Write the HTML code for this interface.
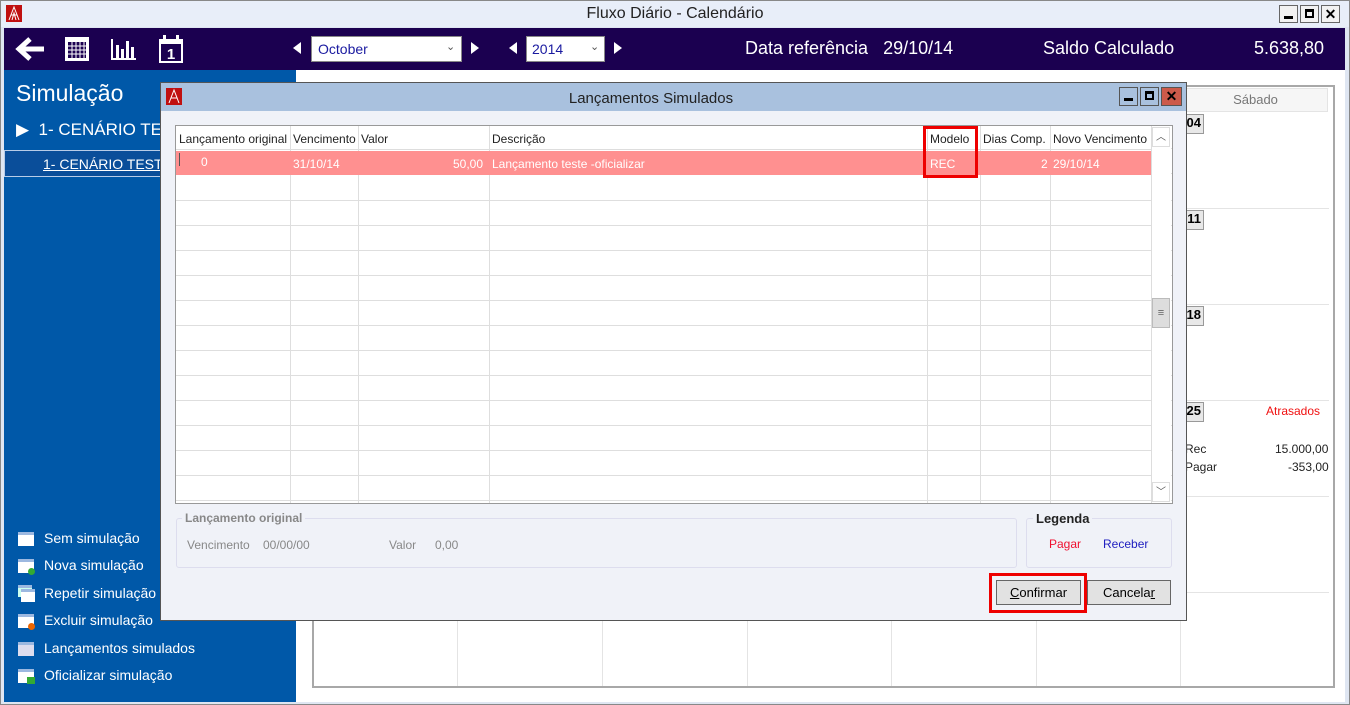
<!DOCTYPE html>
<html><head><meta charset="utf-8"><style>
*{margin:0;padding:0;box-sizing:border-box}
body{width:1350px;height:705px;overflow:hidden;background:#f0f0f0;font-family:"Liberation Sans",sans-serif;position:relative}
.a{position:absolute}
.t{font-size:12px;color:#222;white-space:nowrap}
</style></head><body>
<!-- outer window -->
<div class="a" style="left:0;top:0;width:1350px;height:705px;background:#dfe6f2;border:1px solid #888"></div>
<div class="a" style="left:1px;top:1px;width:1348px;height:26px;background:#e8eef9"></div>
<svg class="a" style="left:6px;top:5px" width="16" height="17"><rect width="16" height="17" fill="#c01010"/><path d="M3 15L8 2L13 15M5 10L11 10M6 15L8 8L10 15" stroke="#fff" stroke-width="1" fill="none"/></svg>
<div class="a" style="left:0;width:1350px;top:5px;text-align:center;font-size:16px;color:#222">Fluxo Diário - Calendário</div>
<div class="a" style="left:1279px;top:5px;width:19px;height:18px;border:1px solid #666;background:#f2f2f2"><div class="a" style="left:4px;top:10px;width:9px;height:3px;background:#000"></div></div>
<div class="a" style="left:1300px;top:5px;width:19px;height:18px;border:1px solid #666;background:#f2f2f2"><div class="a" style="left:4px;top:3px;width:9px;height:9px;border:2px solid #000;border-top-width:3px"></div></div>
<div class="a" style="left:1321px;top:5px;width:19px;height:18px;border:1px solid #666;background:#f2f2f2;font-size:14px;font-weight:bold;text-align:center;line-height:16px">✕</div>
<!-- toolbar -->
<div class="a" style="left:4px;top:28px;width:1341px;height:42px;background:#1b0050"></div>
<svg class="a" style="left:12px;top:35px" width="34" height="28"><path d="M32 14H8M18 4L7 14L18 24" stroke="#fff" stroke-width="5" fill="none"/></svg>
<svg class="a" style="left:64px;top:36px" width="26" height="26"><rect x="1" y="1" width="24" height="24" fill="#fff"/><rect x="4" y="6" width="18" height="16" fill="#1b0050"/><path d="M4 10H22M4 14H22M4 18H22M8 6V22M12 6V22M16 6V22M20 6V22" stroke="#fff" stroke-width="1"/></svg>
<svg class="a" style="left:110px;top:37px" width="28" height="24"><path d="M2 2V22H26" stroke="#fff" stroke-width="2" fill="none"/><rect x="6" y="8" width="3" height="13" fill="#fff"/><rect x="11" y="12" width="3" height="9" fill="#fff"/><rect x="16" y="4" width="3" height="17" fill="#fff"/><rect x="21" y="10" width="3" height="11" fill="#fff"/></svg>
<svg class="a" style="left:157px;top:34px" width="28" height="30"><rect x="2" y="5" width="24" height="24" fill="#fff"/><rect x="4" y="10" width="20" height="17" fill="#1b0050"/><rect x="6" y="1" width="3" height="7" fill="#fff"/><rect x="19" y="1" width="3" height="7" fill="#fff"/><text x="14" y="25" font-size="15" font-weight="bold" fill="#fff" text-anchor="middle" font-family="Liberation Sans">1</text></svg>
<svg class="a" style="left:291px;top:41px" width="12" height="14"><path d="M10 1L2 7L10 13Z" fill="#fff"/></svg>
<div class="a" style="left:311px;top:36px;width:151px;height:26px;background:#fff;border:1px solid #888"><span class="a" style="left:6px;top:4px;font-size:14px;color:#1a1aa0">October</span><span class="a" style="left:134px;top:3px;font-size:11px;color:#555">⌄</span></div>
<svg class="a" style="left:469px;top:41px" width="12" height="14"><path d="M2 1L10 7L2 13Z" fill="#fff"/></svg>
<svg class="a" style="left:507px;top:41px" width="12" height="14"><path d="M10 1L2 7L10 13Z" fill="#fff"/></svg>
<div class="a" style="left:526px;top:36px;width:79px;height:26px;background:#fff;border:1px solid #888"><span class="a" style="left:5px;top:4px;font-size:14px;color:#1a1aa0">2014</span><span class="a" style="left:63px;top:3px;font-size:11px;color:#555">⌄</span></div>
<svg class="a" style="left:612px;top:41px" width="12" height="14"><path d="M2 1L10 7L2 13Z" fill="#fff"/></svg>
<div class="a" style="left:745px;top:38px;font-size:18px;color:#fff">Data referência&nbsp;&nbsp;&nbsp;29/10/14</div>
<div class="a" style="left:1043px;top:38px;font-size:18px;color:#fff">Saldo Calculado</div>
<div class="a" style="left:1254px;top:38px;font-size:18px;color:#fff">5.638,80</div>
<!-- left panel -->
<div class="a" style="left:4px;top:70px;width:292px;height:632px;background:#0058a8"></div>
<div class="a" style="left:16px;top:80px;font-size:23px;color:#fff">Simulação</div>
<div class="a" style="left:16px;top:120px;font-size:17px;color:#fff">▶&nbsp;&nbsp;1- CENÁRIO TESTE</div>
<div class="a" style="left:4px;top:150px;width:292px;height:27px;border:1px solid #b8cce8;background:#0a4e9a"></div>
<div class="a" style="left:43px;top:156px;font-size:14px;color:#fff;text-decoration:underline">1- CENÁRIO TESTE</div>
<div class="a" style="left:18px;top:530px;font-size:14px;color:#fff;line-height:27.4px">
<div>&#8203;</div></div>
<div class="a" style="left:18px;top:530px">
<div style="height:27.4px;position:relative"><span class="a" style="left:0;top:2px;width:16px;height:14px;background:#fff;border-top:3px solid #9cb8e0"></span><span class="a t" style="left:26px;top:0;font-size:14px;color:#fff">Sem simulação</span></div>
<div style="height:27.4px;position:relative"><span class="a" style="left:0;top:2px;width:16px;height:14px;background:#fff;border-top:3px solid #9cb8e0"></span><span class="a" style="left:10px;top:11px;width:7px;height:7px;border-radius:4px;background:#3a3"></span><span class="a t" style="left:26px;top:0;font-size:14px;color:#fff">Nova simulação</span></div>
<div style="height:27.4px;position:relative"><span class="a" style="left:0;top:0;width:14px;height:12px;background:#cfe;border-top:3px solid #9cb8e0"></span><span class="a" style="left:3px;top:4px;width:14px;height:13px;background:#fff;border-top:3px solid #9cb8e0"></span><span class="a t" style="left:26px;top:0;font-size:14px;color:#fff">Repetir simulação</span></div>
<div style="height:27.4px;position:relative"><span class="a" style="left:0;top:2px;width:16px;height:14px;background:#fff;border-top:3px solid #9cb8e0"></span><span class="a" style="left:10px;top:11px;width:7px;height:7px;border-radius:4px;background:#e60"></span><span class="a t" style="left:26px;top:0;font-size:14px;color:#fff">Excluir simulação</span></div>
<div style="height:27.4px;position:relative"><span class="a" style="left:0;top:2px;width:16px;height:14px;background:#dde;border-top:3px solid #9cb8e0"></span><span class="a t" style="left:26px;top:0;font-size:14px;color:#fff">Lançamentos simulados</span></div>
<div style="height:27.4px;position:relative"><span class="a" style="left:0;top:2px;width:16px;height:14px;background:#fff;border-top:3px solid #9cb8e0"></span><span class="a" style="left:9px;top:10px;width:8px;height:7px;background:#3a3"></span><span class="a t" style="left:26px;top:0;font-size:14px;color:#fff">Oficializar simulação</span></div>
</div>
<!-- right area -->
<div class="a" style="left:296px;top:70px;width:1049px;height:632px;background:#fff"></div>
<div class="a" style="left:312px;top:85px;width:1023px;height:603px;border:2px solid #a8a8a8;background:#fff"></div>
<div class="a" style="left:1183px;top:88px;width:145px;height:24px;background:#f6f6f6;border:1px solid #e4e4e4;text-align:center;font-size:13px;color:#777;line-height:22px">Sábado</div>
<div class="a" style="left:314px;top:208px;width:1015px;height:1px;background:#e4e4e4"></div>
<div class="a" style="left:314px;top:304px;width:1015px;height:1px;background:#e4e4e4"></div>
<div class="a" style="left:314px;top:400px;width:1015px;height:1px;background:#e4e4e4"></div>
<div class="a" style="left:314px;top:496px;width:1015px;height:1px;background:#e4e4e4"></div>
<div class="a" style="left:314px;top:592px;width:1015px;height:1px;background:#e4e4e4"></div>
<div class="a" style="left:457px;top:620px;width:1px;height:66px;background:#e4e4e4"></div>
<div class="a" style="left:602px;top:620px;width:1px;height:66px;background:#e4e4e4"></div>
<div class="a" style="left:747px;top:620px;width:1px;height:66px;background:#e4e4e4"></div>
<div class="a" style="left:891px;top:620px;width:1px;height:66px;background:#e4e4e4"></div>
<div class="a" style="left:1036px;top:620px;width:1px;height:66px;background:#e4e4e4"></div>
<div class="a" style="left:1180px;top:593px;width:1px;height:93px;background:#e4e4e4"></div>
<div class="a" style="left:1180px;top:114px;width:24px;height:20px;background:#e8e8e8;border:1px solid #999;font-size:13px;font-weight:bold;text-align:right;padding-right:2px">04</div>
<div class="a" style="left:1180px;top:210px;width:24px;height:20px;background:#e8e8e8;border:1px solid #999;font-size:13px;font-weight:bold;text-align:right;padding-right:2px">11</div>
<div class="a" style="left:1180px;top:306px;width:24px;height:20px;background:#e8e8e8;border:1px solid #999;font-size:13px;font-weight:bold;text-align:right;padding-right:2px">18</div>
<div class="a" style="left:1180px;top:402px;width:24px;height:20px;background:#e8e8e8;border:1px solid #999;font-size:13px;font-weight:bold;text-align:right;padding-right:2px">25</div>
<div class="a t" style="left:1266px;top:404px;color:#f01010">Atrasados</div>
<div class="a t" style="left:1185px;top:442px">Rec</div>
<div class="a t" style="left:1275px;top:442px">15.000,00</div>
<div class="a t" style="left:1185px;top:460px">Pagar</div>
<div class="a t" style="left:1288px;top:460px">-353,00</div>
<!-- dialog -->
<div class="a" style="left:160px;top:82px;width:1027px;height:539px;border:1px solid #555;background:#f0f2f8"></div>
<div class="a" style="left:161px;top:83px;width:1025px;height:28px;background:#a9c1de"></div>
<svg class="a" style="left:166px;top:88px" width="16" height="17"><rect width="16" height="17" fill="#c01010"/><path d="M3 15L8 2L13 15M5 10L11 10" stroke="#fff" stroke-width="1" fill="none"/></svg>
<div class="a" style="left:160px;width:982px;top:90px;text-align:center;font-size:15px;color:#222">Lançamentos Simulados</div>
<div class="a" style="left:1119px;top:87px;width:19px;height:19px;border:1px solid #555;background:#a9c1de"><div class="a" style="left:4px;top:10px;width:9px;height:3px;background:#000"></div></div>
<div class="a" style="left:1140px;top:87px;width:19px;height:19px;border:1px solid #555;background:#a9c1de"><div class="a" style="left:4px;top:3px;width:9px;height:9px;border:2px solid #000;border-top-width:3px"></div></div>
<div class="a" style="left:1161px;top:87px;width:21px;height:19px;border:1px solid #555;background:#cc5a4a;font-size:14px;font-weight:bold;text-align:center;line-height:17px">✕</div>
<!-- grid -->
<div class="a" style="left:175px;top:125px;width:998px;height:379px;border:1px solid #999;background:#fff;
background-image:repeating-linear-gradient(to bottom,transparent 0,transparent 24px,#dedede 24px,#dedede 25px);background-position:0 50px"></div>
<div class="a" style="left:176px;top:126px;width:975px;height:24px;background:#fff;border-bottom:1px solid #ddd"></div>
<div class="a" style="left:290px;top:126px;width:1px;height:377px;background:#dedede"></div>
<div class="a" style="left:358px;top:126px;width:1px;height:377px;background:#dedede"></div>
<div class="a" style="left:489px;top:126px;width:1px;height:377px;background:#dedede"></div>
<div class="a" style="left:927px;top:126px;width:1px;height:377px;background:#dedede"></div>
<div class="a" style="left:980px;top:126px;width:1px;height:377px;background:#dedede"></div>
<div class="a" style="left:1050px;top:126px;width:1px;height:377px;background:#dedede"></div>
<div class="a" style="left:1151px;top:126px;width:20px;height:377px;background:#fff;border-left:1px solid #ddd"></div>
<div class="a" style="left:1152px;top:127px;width:18px;height:20px;border:1px solid #ddd;font-size:10px;text-align:center;color:#555">︿</div>
<div class="a" style="left:1152px;top:298px;width:18px;height:30px;background:#ddd;border:1px solid #bbb;font-size:11px;text-align:center;line-height:28px;color:#666">≡</div>
<div class="a" style="left:1152px;top:482px;width:18px;height:20px;border:1px solid #ddd;font-size:10px;text-align:center;color:#555;line-height:20px">﹀</div>
<div class="a t" style="left:179px;top:132px">Lançamento original</div>
<div class="a t" style="left:293px;top:132px">Vencimento</div>
<div class="a t" style="left:361px;top:132px">Valor</div>
<div class="a t" style="left:492px;top:132px">Descrição</div>
<div class="a t" style="left:930px;top:132px">Modelo</div>
<div class="a t" style="left:983px;top:132px">Dias Comp.</div>
<div class="a t" style="left:1053px;top:132px">Novo Vencimento</div>
<div class="a" style="left:176px;top:151px;width:975px;height:24px;background:#ff9090"></div>
<div class="a" style="left:179px;top:153px;width:1px;height:13px;background:#555"></div>
<div class="a t" style="left:201px;top:155px;color:#fff">0</div>
<div class="a t" style="left:293px;top:157px;color:#fff">31/10/14</div>
<div class="a t" style="left:453px;top:157px;color:#fff">50,00</div>
<div class="a t" style="left:492px;top:157px;color:#fff">Lançamento teste -oficializar</div>
<div class="a t" style="left:930px;top:157px;color:#fff">REC</div>
<div class="a t" style="left:1041px;top:157px;color:#fff">2</div>
<div class="a t" style="left:1053px;top:157px;color:#fff">29/10/14</div>
<div class="a" style="left:923px;top:126px;width:55px;height:52px;border:3px solid #e00"></div>
<!-- bottom groups -->
<div class="a" style="left:176px;top:518px;width:841px;height:50px;border:1px solid #dde;border-radius:3px"></div>
<div class="a" style="left:182px;top:511px;background:#f0f2f8;padding:0 3px;font-size:12px;font-weight:bold;color:#888">Lançamento original</div>
<div class="a t" style="left:187px;top:538px;color:#888">Vencimento</div>
<div class="a t" style="left:263px;top:538px;color:#888">00/00/00</div>
<div class="a t" style="left:389px;top:538px;color:#888">Valor</div>
<div class="a t" style="left:435px;top:538px;color:#888">0,00</div>
<div class="a" style="left:1026px;top:518px;width:146px;height:50px;border:1px solid #dde;border-radius:3px"></div>
<div class="a" style="left:1033px;top:511px;background:#f0f2f8;padding:0 3px;font-size:13px;font-weight:bold;color:#222">Legenda</div>
<div class="a t" style="left:1049px;top:537px;color:#f01030">Pagar</div>
<div class="a t" style="left:1103px;top:537px;color:#2020c0">Receber</div>
<div class="a" style="left:996px;top:580px;width:85px;height:25px;border:1px solid #666;background:#e2e2e2;font-size:13px;text-align:center;line-height:23px"><u>C</u>onfirmar</div>
<div class="a" style="left:1087px;top:580px;width:84px;height:25px;border:1px solid #666;background:#e2e2e2;font-size:13px;text-align:center;line-height:23px">Cancela<u>r</u></div>
<div class="a" style="left:989px;top:573px;width:98px;height:40px;border:3px solid #e00"></div>
</body></html>
